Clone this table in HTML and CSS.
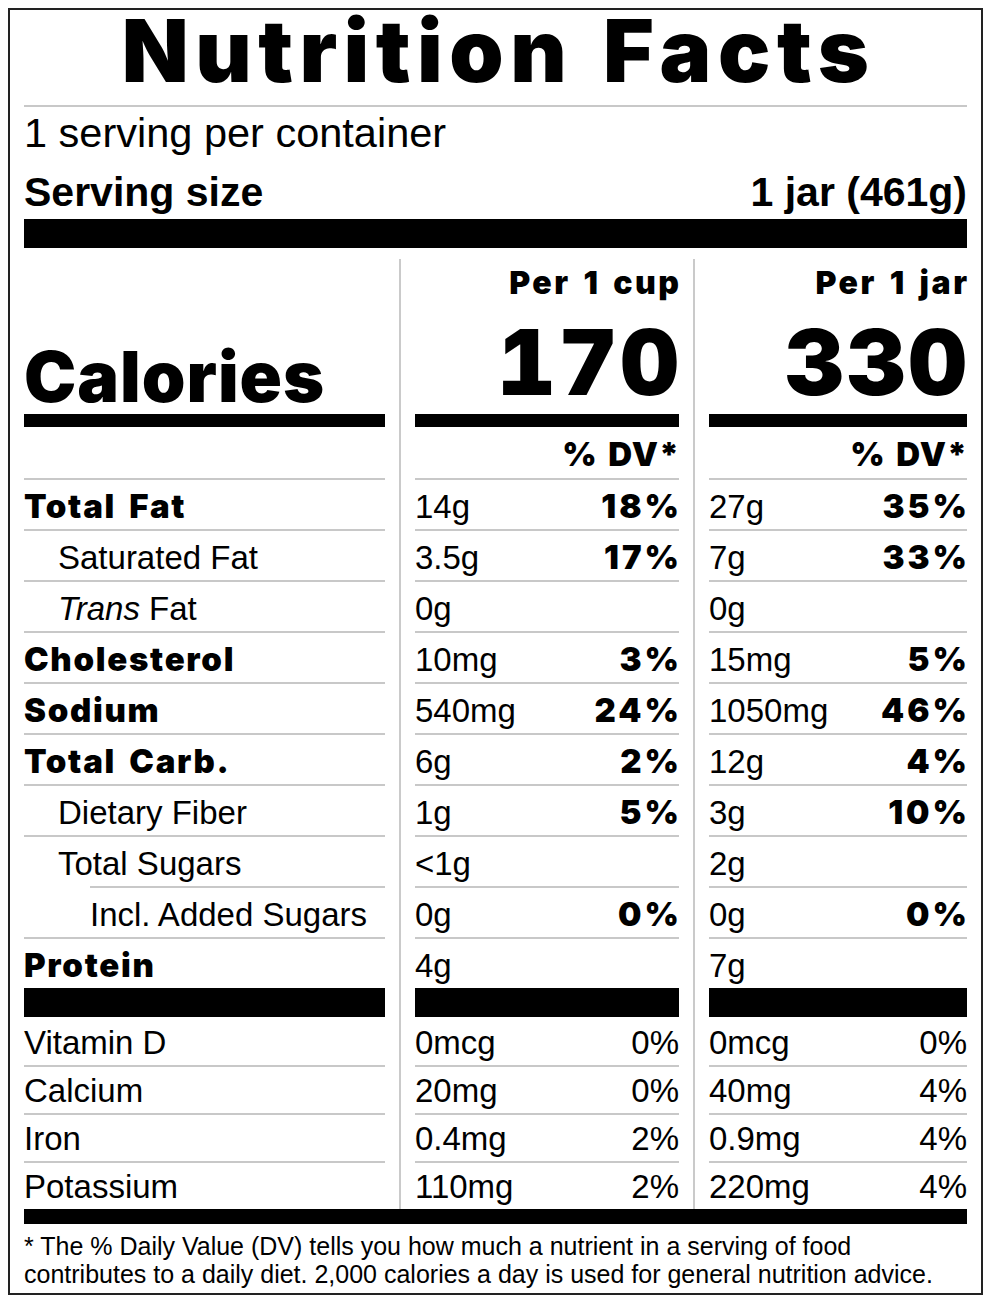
FILE: index.html
```html
<!DOCTYPE html>
<html lang="en">
<head>
<meta charset="utf-8">
<title>Nutrition Facts</title>
<link rel="stylesheet" href="styles.css">
</head>
<body>
<div class="label">
  <h1 class="title">Nutrition Facts</h1>
  <div class="servings">1 serving per container</div>
  <div class="serving-size"><span>Serving size</span><span>1 jar (461g)</span></div>
  <div class="bar-top"></div>

  <div class="table">
    <div class="row head">
      <div class="c1"><div class="head-area"><span class="cal-label">Calories</span></div></div>
      <div class="col c2"><div class="head-area"><span class="per">Per 1 cup</span><span class="cal-num">170</span></div></div>
      <div class="col c3"><div class="head-area"><span class="per">Per 1 jar</span><span class="cal-num">330</span></div></div>
    </div>
    <div class="row">
      <div class="c1"><div class="mbar"></div></div>
      <div class="col c2"><div class="mbar"></div></div>
      <div class="col c3"><div class="mbar"></div></div>
    </div>
    <div class="row">
      <div class="c1"><div class="dv"></div></div>
      <div class="col c2"><div class="dv"><span>% DV*</span></div></div>
      <div class="col c3"><div class="dv"><span>% DV*</span></div></div>
    </div>

    <div class="row">
      <div class="c1"><div class="cell heavy">Total Fat</div></div>
      <div class="col c2"><div class="cell val"><span>14g</span><b>18%</b></div></div>
      <div class="col c3"><div class="cell val"><span>27g</span><b>35%</b></div></div>
    </div>
    <div class="row">
      <div class="c1"><div class="cell sub">Saturated Fat</div></div>
      <div class="col c2"><div class="cell val"><span>3.5g</span><b>17%</b></div></div>
      <div class="col c3"><div class="cell val"><span>7g</span><b>33%</b></div></div>
    </div>
    <div class="row">
      <div class="c1"><div class="cell sub"><i>Trans</i> Fat</div></div>
      <div class="col c2"><div class="cell val"><span>0g</span></div></div>
      <div class="col c3"><div class="cell val"><span>0g</span></div></div>
    </div>
    <div class="row">
      <div class="c1"><div class="cell heavy">Cholesterol</div></div>
      <div class="col c2"><div class="cell val"><span>10mg</span><b>3%</b></div></div>
      <div class="col c3"><div class="cell val"><span>15mg</span><b>5%</b></div></div>
    </div>
    <div class="row">
      <div class="c1"><div class="cell heavy">Sodium</div></div>
      <div class="col c2"><div class="cell val"><span>540mg</span><b>24%</b></div></div>
      <div class="col c3"><div class="cell val"><span>1050mg</span><b>46%</b></div></div>
    </div>
    <div class="row">
      <div class="c1"><div class="cell heavy">Total Carb.</div></div>
      <div class="col c2"><div class="cell val"><span>6g</span><b>2%</b></div></div>
      <div class="col c3"><div class="cell val"><span>12g</span><b>4%</b></div></div>
    </div>
    <div class="row">
      <div class="c1"><div class="cell sub">Dietary Fiber</div></div>
      <div class="col c2"><div class="cell val"><span>1g</span><b>5%</b></div></div>
      <div class="col c3"><div class="cell val"><span>3g</span><b>10%</b></div></div>
    </div>
    <div class="row">
      <div class="c1"><div class="cell sub">Total Sugars</div></div>
      <div class="col c2"><div class="cell val"><span>&lt;1g</span></div></div>
      <div class="col c3"><div class="cell val"><span>2g</span></div></div>
    </div>
    <div class="row">
      <div class="c1"><div class="cell subsub">Incl. Added Sugars</div></div>
      <div class="col c2"><div class="cell val"><span>0g</span><b>0%</b></div></div>
      <div class="col c3"><div class="cell val"><span>0g</span><b>0%</b></div></div>
    </div>
    <div class="row">
      <div class="c1"><div class="cell heavy">Protein</div></div>
      <div class="col c2"><div class="cell val"><span>4g</span></div></div>
      <div class="col c3"><div class="cell val"><span>7g</span></div></div>
    </div>
    <div class="row">
      <div class="c1"><div class="pbar"></div></div>
      <div class="col c2"><div class="pbar"></div></div>
      <div class="col c3"><div class="pbar"></div></div>
    </div>

    <div class="row vit first">
      <div class="c1"><div class="cell">Vitamin D</div></div>
      <div class="col c2"><div class="cell val"><span>0mcg</span><span>0%</span></div></div>
      <div class="col c3"><div class="cell val"><span>0mcg</span><span>0%</span></div></div>
    </div>
    <div class="row vit">
      <div class="c1"><div class="cell">Calcium</div></div>
      <div class="col c2"><div class="cell val"><span>20mg</span><span>0%</span></div></div>
      <div class="col c3"><div class="cell val"><span>40mg</span><span>4%</span></div></div>
    </div>
    <div class="row vit">
      <div class="c1"><div class="cell">Iron</div></div>
      <div class="col c2"><div class="cell val"><span>0.4mg</span><span>2%</span></div></div>
      <div class="col c3"><div class="cell val"><span>0.9mg</span><span>4%</span></div></div>
    </div>
    <div class="row vit">
      <div class="c1"><div class="cell">Potassium</div></div>
      <div class="col c2"><div class="cell val"><span>110mg</span><span>2%</span></div></div>
      <div class="col c3"><div class="cell val"><span>220mg</span><span>4%</span></div></div>
    </div>
  </div>

  <div class="bar-bottom"></div>
  <p class="footnote">* The % Daily Value (DV) tells you how much a nutrient in a serving of food<br>contributes to a daily diet. 2,000 calories a day is used for general nutrition advice.</p>
</div>
</body>
</html>
```

FILE: styles.css
```css
html, body {
  margin: 0;
  padding: 0;
  background: #fff;
}
body {
  padding: 8px;
  font-family: "Liberation Sans", Arial, sans-serif;
  color: #000;
}
.label {
  border: 2px solid #222;
  padding: 0 14px 5px;
}
.title {
  margin: 0;
  font-family: "Inter", "Liberation Sans", sans-serif;
  font-weight: 900;
  font-size: 87px;
  line-height: 82px;
  text-align: center;
  padding: 0 0 13px 6px;
  border-bottom: 2px solid #c8c8c8;
  letter-spacing: 6.5px;
  word-spacing: 6px;
}
.servings {
  font-size: 41.5px;
  line-height: 46px;
  padding-top: 3px;
}
.serving-size {
  display: flex;
  justify-content: space-between;
  font-size: 41px;
  font-weight: 700;
  line-height: 46px;
  margin-top: 13px;
}
.bar-top {
  height: 29px;
  background: #000;
  margin-top: 4px;
}
.table {
  margin-top: 11px;
}
.row {
  display: flex;
}
.c1 {
  width: 361px;
  flex: none;
}
.col {
  flex: none;
  margin-left: 14px;
  border-left: 2px solid #cacaca;
  padding-left: 14px;
}
.c2 { width: 264px; }
.c3 { width: 258px; }

.head-area {
  height: 155px;
  display: flex;
  flex-direction: column;
  align-items: flex-end;
  justify-content: space-between;
  font-family: "Inter", "Liberation Sans", sans-serif;
  font-weight: 900;
}
.c1 .head-area {
  align-items: flex-start;
  justify-content: flex-end;
}
.cal-label {
  font-size: 70px;
  line-height: 70px;
  margin-bottom: 2px;
  letter-spacing: 1px;
}
.per {
  font-size: 32px;
  line-height: 32px;
  margin-top: 8px;
  letter-spacing: 2.5px;
  word-spacing: 4px;
  margin-right: -2.5px;
}
.cal-num {
  font-size: 91px;
  line-height: 91px;
  margin-bottom: 6px;
  font-variant-numeric: tabular-nums;
  font-feature-settings: "tnum" 1;
  letter-spacing: 3px;
  margin-right: -3px;
}
.mbar {
  height: 13px;
  background: #000;
}
.dv {
  height: 51px;
  box-sizing: border-box;
  padding-top: 4px;
  line-height: 47px;
  text-align: right;
  font-family: "Inter", "Liberation Sans", sans-serif;
  font-weight: 900;
  font-size: 33px;
}
.dv span {
  letter-spacing: 1px;
  word-spacing: 3px;
  margin-right: -1px;
}
.cell {
  box-sizing: border-box;
  height: 51px;
  border-top: 2px solid #c8c8c8;
  padding-top: 4px;
  line-height: 45px;
  font-size: 33px;
  white-space: nowrap;
}
.val {
  display: flex;
  justify-content: space-between;
}
.cell b {
  font-family: "Inter", "Liberation Sans", sans-serif;
  font-weight: 900;
  letter-spacing: 3px;
  margin-right: -3px;
}
.heavy {
  font-family: "Inter", "Liberation Sans", sans-serif;
  font-weight: 900;
  letter-spacing: 1.7px;
  word-spacing: 5px;
}
.sub {
  padding-left: 34px;
}
.subsub {
  margin-left: 66px;
}
.pbar {
  height: 29px;
  background: #000;
}
.vit .cell {
  height: 48px;
  padding-top: 2px;
  line-height: 44px;
}
.vit.first .cell {
  border-top: 0;
  padding-top: 4px;
}
.bar-bottom {
  height: 15px;
  background: #000;
}
.footnote {
  margin: 9px 0 0;
  font-size: 25px;
  line-height: 27.5px;
}
```
